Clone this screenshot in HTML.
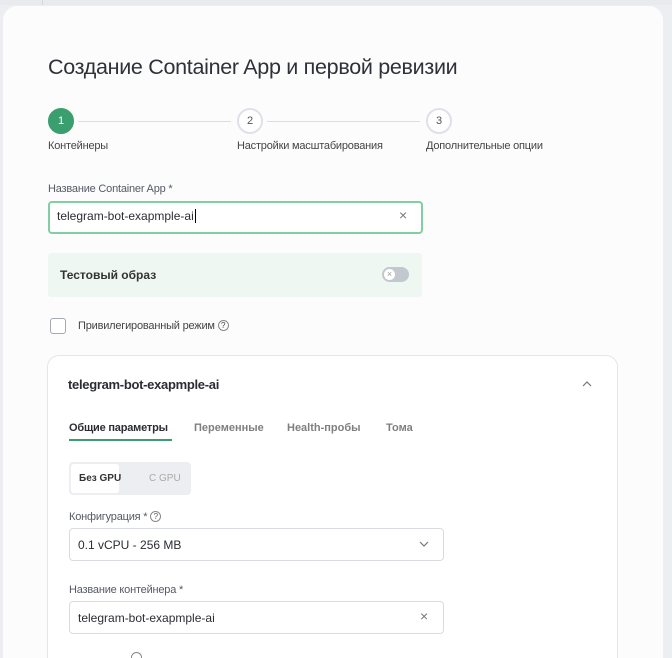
<!DOCTYPE html>
<html><head><meta charset="utf-8"><style>
*{box-sizing:border-box;margin:0;padding:0}
html,body{width:672px;height:658px;overflow:hidden;background:#eceef2}
body{font-family:"Liberation Sans","DejaVu Sans",sans-serif;color:#2b2d33}
#w{position:relative;width:672px;height:658px;overflow:hidden}
.a{position:absolute}
.card{left:3px;top:6px;width:660px;height:652px;background:#fcfcfd;border-radius:14px 14px 0 0}
.t{white-space:nowrap}
.circ{width:26px;height:26px;border-radius:50%;border:2px solid #dfe1e8;font-size:11px;text-align:center;line-height:22px;color:#555;background:#fff}
.line{height:1px;background:#dcdee3;top:121px}
.lbl{font-size:11px;color:#555a63;letter-spacing:-0.2px}
.inp{border:1px solid #d8dbe0;border-radius:4px;background:#fff}
.x{font-size:14px;color:#777}
</style></head><body><div id="w">
<div class="a" style="left:0;top:0;width:672px;height:5px;background:#e8eaee"></div>
<div class="a" style="left:42px;top:0;width:1px;height:5px;background:#d5d7dc"></div>
<div class="a card"></div>
<div class="a t" style="left:48px;top:55px;font-size:21.5px;color:#2f3138;letter-spacing:-0.3px">Создание Container App и первой ревизии</div>

<div class="a circ" style="left:48px;top:108px;background:#3b9e6e;border-color:#3b9e6e;color:#fff">1</div>
<div class="a line" style="left:78px;width:153px"></div>
<div class="a circ" style="left:237px;top:108px">2</div>
<div class="a line" style="left:267px;width:153px"></div>
<div class="a circ" style="left:426px;top:108px">3</div>
<div class="a t lbl" style="left:48px;top:140px;color:#444">Контейнеры</div>
<div class="a t lbl" style="left:237px;top:140px;color:#444">Настройки масштабирования</div>
<div class="a t lbl" style="left:426px;top:140px;color:#444">Дополнительные опции</div>

<div class="a t lbl" style="left:48px;top:183px">Название Container App *</div>
<div class="a" style="left:48px;top:201px;width:375px;height:33px;border:2px solid #7fcfa3;border-radius:4px;background:#fff"></div>
<div class="a t" style="left:57px;top:209px;font-size:12px;color:#2b2d33">telegram-bot-exapmple-ai<span style="border-left:1px solid #000;margin-left:1px"></span></div>
<div class="a x" style="left:399px;top:207px">×</div>

<div class="a" style="left:48px;top:253px;width:374px;height:44px;background:#eff7f2;border-radius:3px"></div>
<div class="a t" style="left:60px;top:268px;font-size:12px;font-weight:bold;color:#333">Тестовый образ</div>
<div class="a" style="left:382px;top:267px;width:27px;height:15px;border-radius:8px;background:#c3c7ce"></div>
<div class="a" style="left:384px;top:269px;width:11px;height:11px;border-radius:50%;background:#fff;font-size:9px;line-height:11px;text-align:center;color:#999">×</div>

<div class="a" style="left:50px;top:318px;width:16px;height:16px;border:1.5px solid #a5a9b1;border-radius:3px;background:#fff"></div>
<div class="a t lbl" style="left:78px;top:320px;color:#444">Привилегированный режим <span style="display:inline-block;width:11px;height:11px;border:1px solid #888;border-radius:50%;font-size:8px;line-height:9px;text-align:center;vertical-align:1px">?</span></div>

<div class="a" style="left:47px;top:355px;width:571px;height:303px;border:1px solid #e4e6ea;border-bottom:none;border-radius:12px 12px 0 0;background:#fff"></div>
<div class="a t" style="left:68px;top:377px;font-size:13px;font-weight:bold;color:#2b2d33;letter-spacing:-0.3px">telegram-bot-exapmple-ai</div>
<svg class="a" style="left:581px;top:380px" width="12" height="8"><path d="M2 6 L6 2 L10 6" fill="none" stroke="#777" stroke-width="1.2"/></svg>

<div class="a t" style="left:69px;top:422px;font-size:11px;font-weight:bold;color:#2b2d33;letter-spacing:-0.2px">Общие параметры</div>
<div class="a" style="left:69px;top:439px;width:103px;height:2px;background:#3b9e6e"></div>
<div class="a t" style="left:194px;top:422px;font-size:11px;color:#555;font-weight:bold;opacity:.75">Переменные</div>
<div class="a t" style="left:287px;top:422px;font-size:11px;color:#555;font-weight:bold;opacity:.75">Health-пробы</div>
<div class="a t" style="left:386px;top:422px;font-size:11px;color:#555;font-weight:bold;opacity:.75">Тома</div>

<div class="a" style="left:69px;top:462px;width:122px;height:33px;background:#eceef1;border-radius:4px"></div>
<div class="a" style="left:71px;top:464px;width:48px;height:29px;background:#fff;border-radius:3px"></div>
<div class="a t" style="left:79px;top:473px;font-size:10px;font-weight:bold;color:#333">Без GPU</div>
<div class="a t" style="left:149px;top:473px;font-size:10px;color:#aaa">С GPU</div>

<div class="a t lbl" style="left:69px;top:511px">Конфигурация * <span style="display:inline-block;width:11px;height:11px;border:1px solid #888;border-radius:50%;font-size:8px;line-height:9px;text-align:center;vertical-align:1px">?</span></div>
<div class="a inp" style="left:69px;top:528px;width:375px;height:33px"></div>
<div class="a t" style="left:78px;top:538px;font-size:12px">0.1 vCPU - 256 MB</div>
<svg class="a" style="left:418px;top:540px" width="12" height="8"><path d="M2 2 L6 6 L10 2" fill="none" stroke="#777" stroke-width="1.2"/></svg>

<div class="a t lbl" style="left:69px;top:584px">Название контейнера *</div>
<div class="a inp" style="left:69px;top:601px;width:375px;height:33px"></div>
<div class="a t" style="left:78px;top:611px;font-size:12px">telegram-bot-exapmple-ai</div>
<div class="a x" style="left:420px;top:608px">×</div>
<div class="a" style="left:131px;top:652px;width:11px;height:6px;border:1px solid #888;border-bottom:none;border-radius:6px 6px 0 0"></div>
</div></body></html>
